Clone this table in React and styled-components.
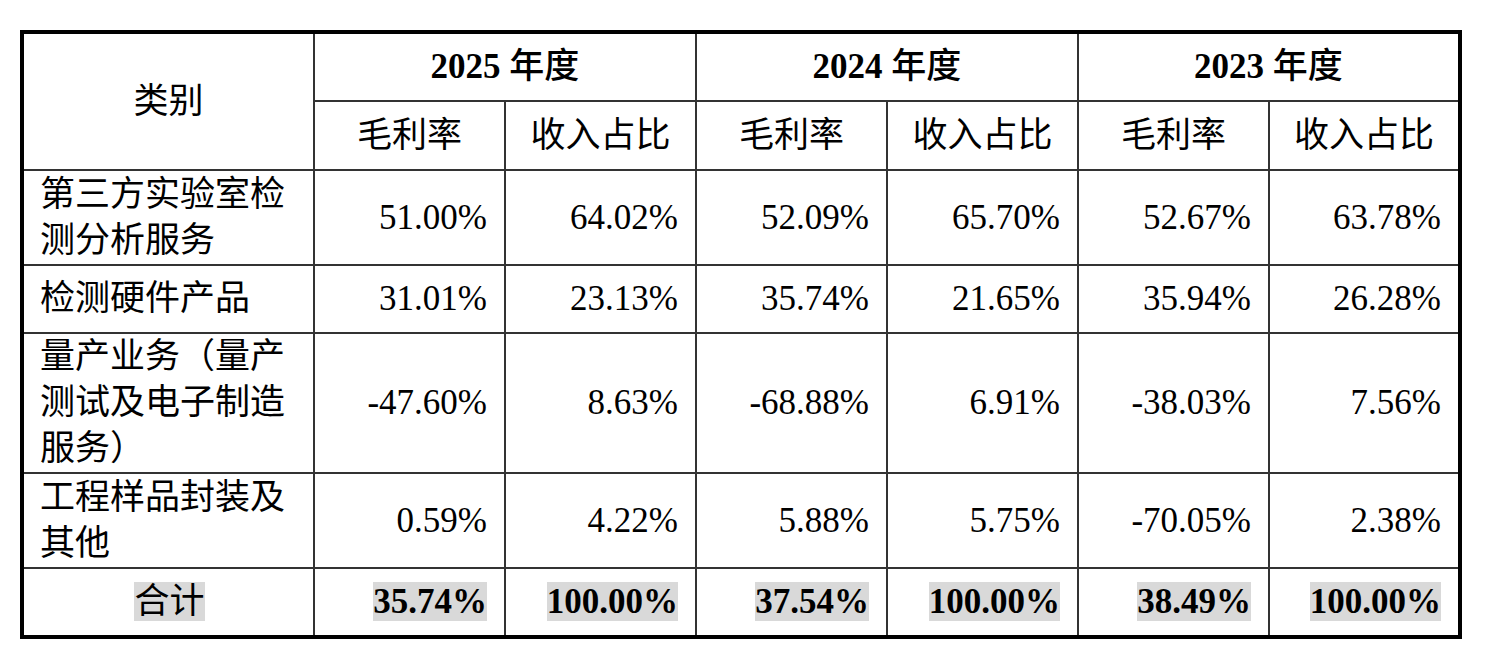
import React from 'react';
import styled, { createGlobalStyle } from 'styled-components';

const GlobalStyle = createGlobalStyle`
  html, body {
    margin: 0;
    padding: 0;
    background: #ffffff;
  }
`;

const Page = styled.div`
  padding: 30px 0 0 20px;
  font-family: "Liberation Serif", "Noto Sans CJK SC", serif;
  color: #000;
`;

const Table = styled.table`
  width: 1442px;
  table-layout: fixed;
  border-collapse: collapse;
  border: 4px solid #000;
  font-size: 35px;
`;

const Row = styled.tr`
  height: ${props => props.$h}px;
`;

const HeadCell = styled.th`
  border: 2px solid #333;
  font-weight: ${props => (props.$bold ? 700 : 400)};
  text-align: center;
  vertical-align: middle;
  padding: 0;
  line-height: 46px;
`;

const YearLabel = styled.span`
  font-weight: 500;
`;

const NameCell = styled.td`
  border: 2px solid #333;
  padding: 0 14px 0 16px;
  line-height: 46px;
  text-align: ${props => props.$align || 'left'};
  vertical-align: middle;
`;

const NumCell = styled.td`
  border: 2px solid #333;
  padding: 0 17px 0 10px;
  text-align: right;
  vertical-align: middle;
  line-height: 46px;
  font-weight: ${props => (props.$bold ? 700 : 400)};
`;

const Highlight = styled.span`
  display: inline-block;
  background: #d9d9d9;
  line-height: 39px;
`;

const years = ['2025', '2024', '2023'];

const rows = [
  { name: '第三方实验室检测分析服务', h: 95, values: ['51.00%', '64.02%', '52.09%', '65.70%', '52.67%', '63.78%'] },
  { name: '检测硬件产品', h: 68, values: ['31.01%', '23.13%', '35.74%', '21.65%', '35.94%', '26.28%'] },
  { name: '量产业务（量产测试及电子制造服务）', h: 139, values: ['-47.60%', '8.63%', '-68.88%', '6.91%', '-38.03%', '7.56%'] },
  { name: '工程样品封装及其他', h: 95, values: ['0.59%', '4.22%', '5.88%', '5.75%', '-70.05%', '2.38%'] },
];

const totals = ['35.74%', '100.00%', '37.54%', '100.00%', '38.49%', '100.00%'];

export default function App() {
  return (
    <Page>
      <GlobalStyle />
      <Table>
        <colgroup>
          <col style={{ width: 292 }} />
          {totals.map((_, i) => <col key={i} />)}
        </colgroup>
        <thead>
          <Row $h={69}>
            <HeadCell rowSpan={2}>类别</HeadCell>
            {years.map(y => (
              <HeadCell key={y} colSpan={2} $bold>
                {y} <YearLabel>年度</YearLabel>
              </HeadCell>
            ))}
          </Row>
          <Row $h={69}>
            {years.map(y => (
              <React.Fragment key={y}>
                <HeadCell>毛利率</HeadCell>
                <HeadCell>收入占比</HeadCell>
              </React.Fragment>
            ))}
          </Row>
        </thead>
        <tbody>
          {rows.map(r => (
            <Row key={r.name} $h={r.h}>
              <NameCell>{r.name}</NameCell>
              {r.values.map((v, i) => <NumCell key={i}>{v}</NumCell>)}
            </Row>
          ))}
          <Row $h={69}>
            <NameCell $align="center"><Highlight>合计</Highlight></NameCell>
            {totals.map((v, i) => (
              <NumCell key={i} $bold><Highlight>{v}</Highlight></NumCell>
            ))}
          </Row>
        </tbody>
      </Table>
    </Page>
  );
}
